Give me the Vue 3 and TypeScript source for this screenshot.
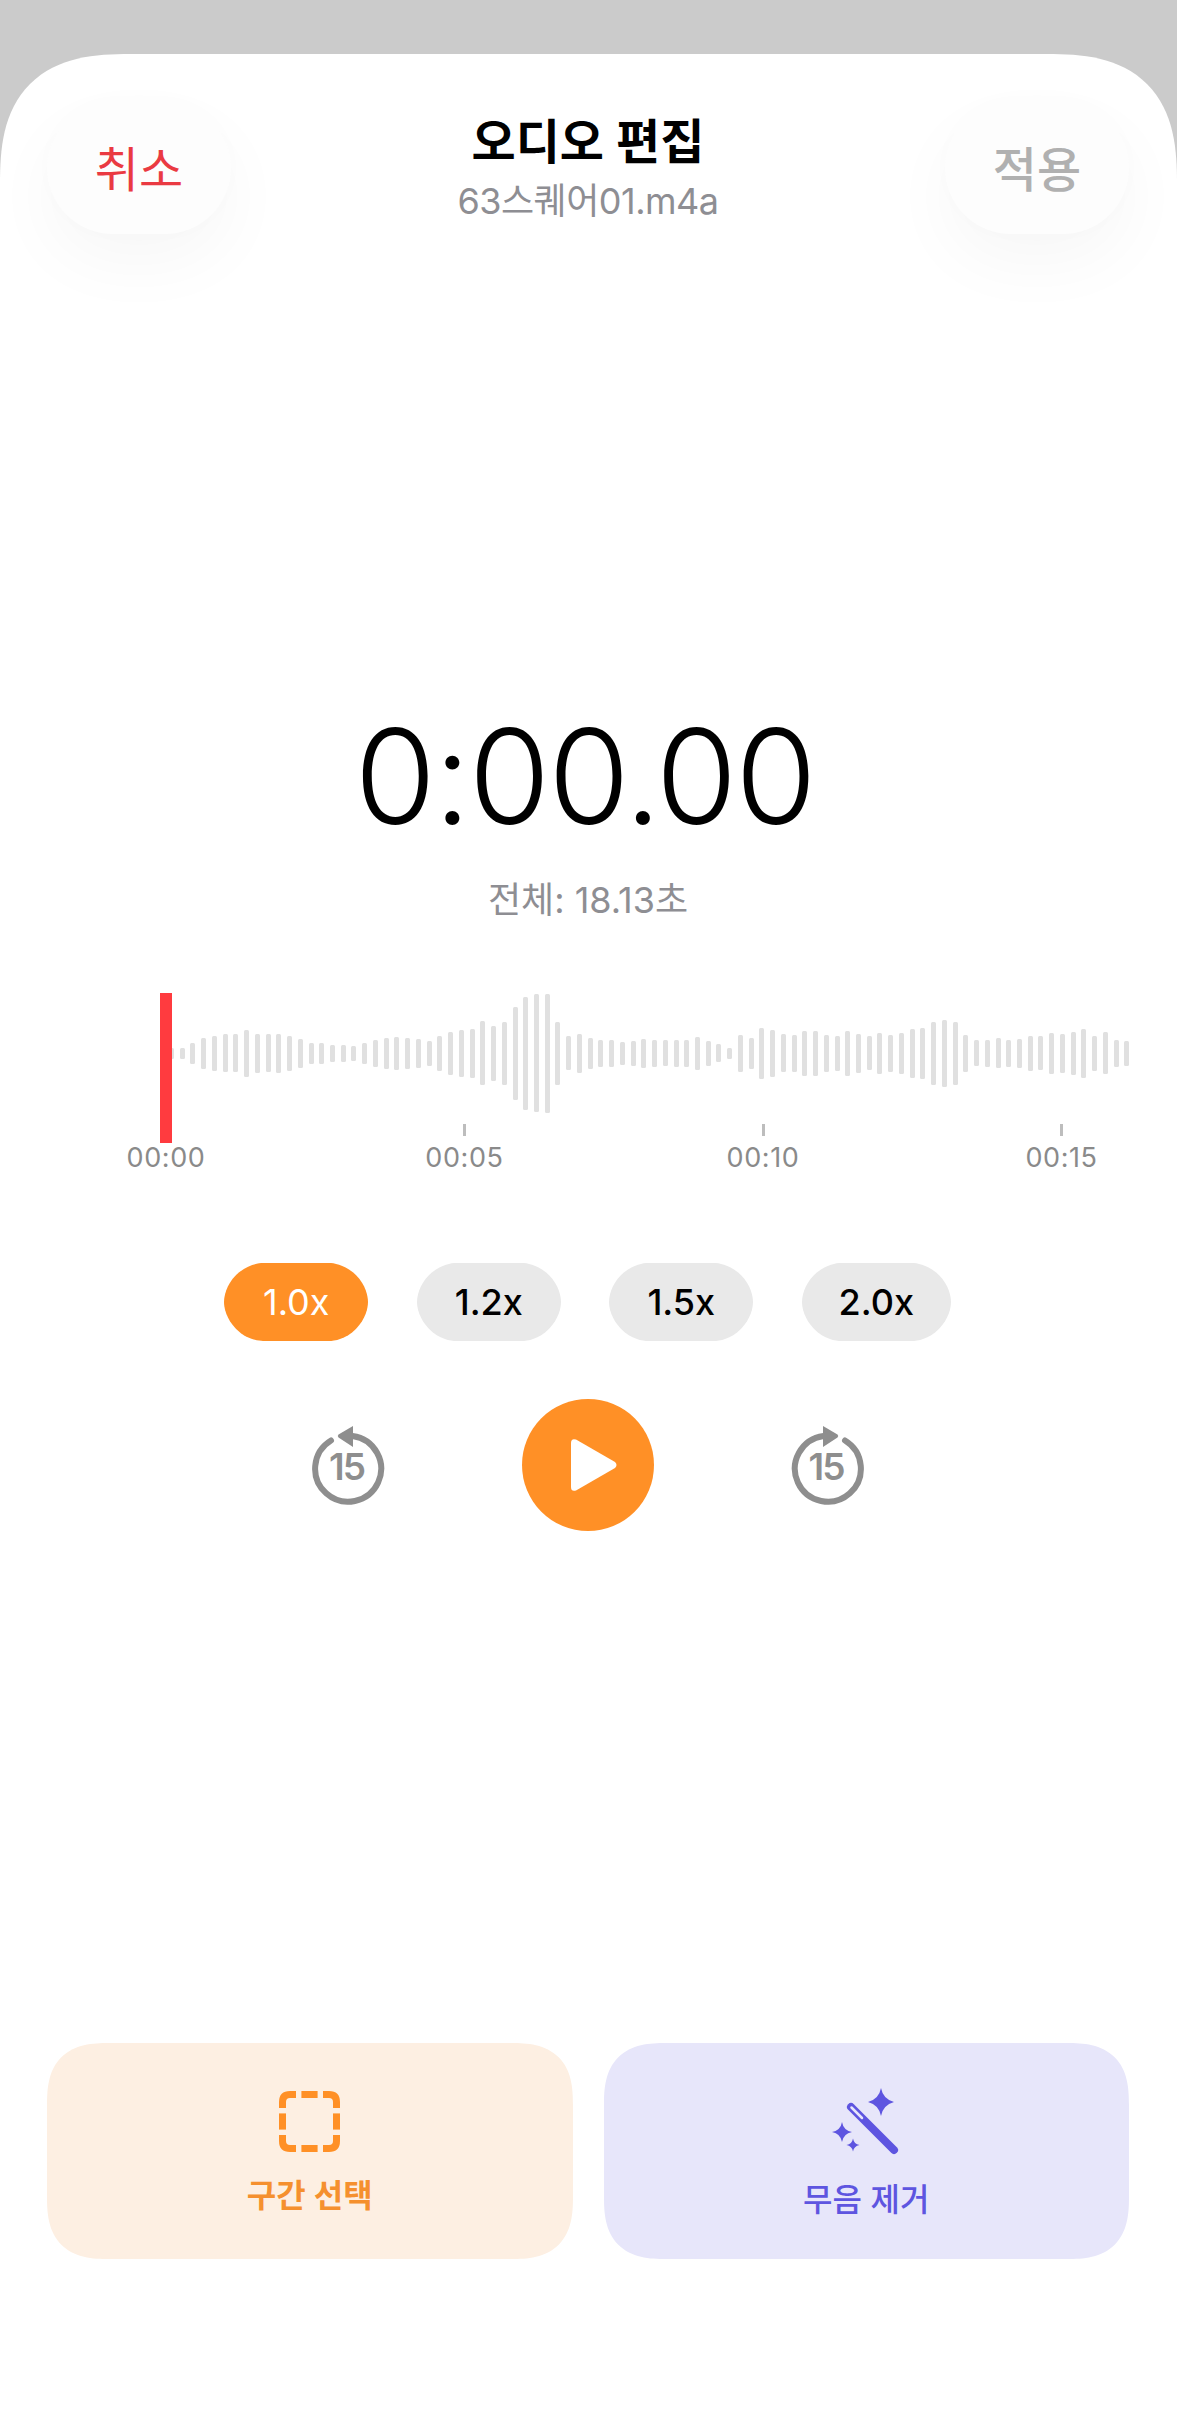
<template>
  <div class="screen">
    <div class="sheet">
      <!-- 헤더 -->
      <header class="header">
        <button class="head-btn cancel">취소</button>
        <div class="head-title">
          <h1 class="title">오디오 편집</h1>
          <p class="file-name">63스퀘어01.m4a</p>
        </div>
        <button class="head-btn apply">적용</button>
      </header>

      <!-- 시간 -->
      <div class="time">0:00.00</div>
      <div class="total">전체: 18.13초</div>

      <!-- 파형 -->
      <div class="wave-wrap">
        <div class="wave">
          <span
            v-for="(h, i) in bars"
            :key="i"
            class="bar"
            :style="{ height: h + 'px' }"
          ></span>
        </div>
        <div class="playhead"></div>
      </div>
      <div class="ticks">
        <div v-for="(t, i) in ticks" :key="t" class="tick">
          <span class="tick-line" :class="{ hidden: i === 0 }"></span>
          <span class="tick-label">{{ t }}</span>
        </div>
      </div>

      <!-- 배속 -->
      <div class="speeds">
        <button
          v-for="s in speeds"
          :key="s"
          class="speed"
          :class="{ active: s === speed, wide: s === '2.0x' }"
        >
          {{ s }}
        </button>
      </div>

      <!-- 재생 컨트롤 -->
      <div class="controls">
        <svg class="skip" viewBox="0 0 80 84" width="80" height="84">
          <path d="M21 17.5 A33 33 0 1 0 42.5 13" class="skip-arc" />
          <path d="M43 3 L28.5 11.5 Q27 13 28.5 14.5 L43 24 Z" class="skip-head" />
          <text x="36.5" y="57" class="skip-text">15</text>
        </svg>
        <button class="play">
          <svg viewBox="0 0 48 54" width="48" height="54">
            <path
              d="M1 5 Q1 0 6 1.5 L45 24 Q48 27 45 30 L6 52.500 Q1 54 1 49 Z"
              fill="#fff"
            />
          </svg>
        </button>
        <svg class="skip" viewBox="0 0 80 84" width="80" height="84">
          <path d="M59 17.5 A33 33 0 1 1 37.5 13" class="skip-arc" />
          <path d="M37 3 L51.5 11.5 Q53 13 51.5 14.5 L37 24 Z" class="skip-head" />
          <text x="40" y="57" class="skip-text">15</text>
        </svg>
      </div>

      <!-- 하단 액션 -->
      <div class="actions">
        <button class="action select">
          <svg viewBox="0 0 61 61" width="61" height="61" class="action-icon">
            <g fill="none" stroke="#ff9026" stroke-width="7">
              <path d="M3.5 17 V11 Q3.500 3.500 11 3.500 H17" />
              <path d="M22.4 3.5 H38.6" />
              <path d="M44 3.5 H50 Q57.500 3.500 57.500 11 V17" />
              <path d="M57.5 22.4 V38.6" />
              <path d="M57.5 44 V50 Q57.500 57.500 50 57.500 H44" />
              <path d="M38.6 57.5 H22.4" />
              <path d="M17 57.5 H11 Q3.500 57.500 3.500 50 V44" />
              <path d="M3.5 38.6 V22.4" />
            </g>
          </svg>
          <span class="action-label">구간 선택</span>
        </button>
        <button class="action silence">
          <svg viewBox="0 0 66 68" width="66" height="68" class="action-icon">
            <g fill="#5e55e0">
              <path d="M48 0 Q50 11 61 14 Q50 17 48 28 Q46 17 35 14 Q46 11 48 0 Z" />
              <path d="M9 34 Q10.5 42.5 19 44 Q10.5 45.5 9 54 Q7.5 45.5 -1 44 Q7.5 42.5 9 34 Z" />
              <path d="M20 50.5 Q21 56 26.500 57 Q21 58 20 63.500 Q19 58 13.500 57 Q19 56 20 50.500 Z" />
            </g>
            <path d="M18 19 L61 62" stroke="#5e55e0" stroke-width="8" stroke-linecap="round" />
            <path d="M18.500 19.500 L29 30" stroke="#e7e6fa" stroke-width="2.500" stroke-linecap="round" />
          </svg>
          <span class="action-label">무음 제거</span>
        </button>
      </div>
    </div>
  </div>
</template>

<script setup lang="ts">
import { ref } from "vue";

defineOptions({ name: "AudioEditor" });

const speeds = ["1.0x", "1.2x", "1.5x", "2.0x"];
const speed = ref("1.0x");
const ticks = ["00:00", "00:05", "00:10", "00:15"];

// 파형 막대 높이
const bars = [
  11, 11, 21, 31, 35, 38, 38, 47, 39, 38, 39, 35, 29, 21, 21, 17, 17, 15, 21, 27, 31,
  33, 31, 29, 25, 35, 43, 47, 49, 64, 55, 63, 93, 113, 118, 119, 63, 34, 39, 31, 27, 27,
  23, 25, 29, 27, 26, 27, 27, 33, 25, 18, 11, 37, 31, 51, 47, 38, 37, 45, 45, 37, 35,
  45, 39, 34, 41, 37, 41, 49, 51, 63, 67, 63, 37, 26, 27, 30, 27, 29, 35, 34, 41, 39,
  43, 49, 35, 42, 27, 25,
];
</script>

<style>
html,
body {
  margin: 0;
  background: #cbcbcb;
}
</style>

<style scoped>
.screen {
  height: 2433px;
  padding-top: 54px;
  box-sizing: border-box;
  background: #cbcbcb;
  font-family: "Inter", "Noto Sans CJK KR", sans-serif;
  overflow: hidden;
}

.sheet {
  height: 100%;
  box-sizing: border-box;
  padding: 48px 48px 174px 47px;
  background: #fff;
  border-radius: 130px 130px 0 0;
  corner-shape: superellipse(1.4);
  display: flex;
  flex-direction: column;
}

button {
  border: none;
  padding: 0;
  font-family: inherit;
}

/* 헤더 */
.header {
  display: flex;
  justify-content: space-between;
  align-items: flex-start;
}

.head-btn {
  width: 184px;
  height: 132px;
  padding-bottom: 5px;
  border-radius: 66px;
  background: #fdfdfd;
  box-shadow: 0 28px 70px rgba(0, 0, 0, 0.035), 0 0 30px rgba(0, 0, 0, 0.012);
  font-size: 48px;
}

.cancel {
  color: #ea3a42;
}

.apply {
  color: #b0b0b0;
  font-weight: 500;
}

.head-title {
  text-align: center;
  padding-top: 5px;
}

.title {
  margin: 0;
  font-size: 48px;
  line-height: 70px;
  font-weight: 600;
  color: #000;
}

.file-name {
  margin: 0;
  font-size: 36px;
  line-height: 48px;
  letter-spacing: -0.5px;
  color: #8e8e93;
}

/* 시간 */
.time {
  margin-top: 462px;
  padding-right: 7px;
  text-align: center;
  font-size: 132px;
  line-height: 160px;
  font-weight: 330;
  letter-spacing: -2.2px;
  color: #000;
}

.total {
  margin-top: 22px;
  text-align: center;
  font-size: 36px;
  line-height: 44px;
  color: #8e8e93;
}

/* 파형 */
.wave-wrap {
  position: relative;
  margin-top: 71px;
}

.wave {
  height: 120px;
  margin-left: 122px;
  display: flex;
  align-items: center;
  gap: 5.74px;
}

.bar {
  flex: none;
  width: 5px;
  border-radius: 1.5px;
  background: #e0e0e0;
}

.playhead {
  position: absolute;
  left: 113px;
  top: 0;
  width: 12px;
  height: 150px;
  background: #ff3b3f;
}

.ticks {
  margin: 11px 0 0 69px;
  display: flex;
  gap: 198.5px;
}

.tick {
  width: 100px;
  display: flex;
  flex-direction: column;
  align-items: center;
}

.tick-line {
  width: 3px;
  height: 12px;
  background: #bdbdbd;
}

.tick-line.hidden {
  visibility: hidden;
}

.tick-label {
  margin-top: 6px;
  font-size: 27px;
  line-height: 32px;
  letter-spacing: 0.6px;
  color: #8a8a8a;
}

/* 배속 */
.speeds {
  margin-top: 89px;
  padding-right: 1px;
  display: flex;
  justify-content: center;
  gap: 48.5px;
}

.speed {
  width: 144px;
  height: 78px;
  border-radius: 39px;
  corner-shape: superellipse(0.9);
  background: #e9e9e9;
  color: #000;
  font-size: 36px;
  font-weight: 500;
}

.speed.wide {
  width: 149px;
}

.speed.active {
  background: #ff9026;
  color: #fff;
  font-weight: 400;
}

/* 재생 컨트롤 */
.controls {
  margin-top: 58px;
  display: flex;
  justify-content: center;
  align-items: center;
  gap: 132px;
}

.skip {
  flex: none;
}

.skip-arc {
  fill: none;
  stroke: #8e8e8e;
  stroke-width: 6;
  stroke-linecap: round;
}

.skip-head {
  fill: #8e8e8e;
}

.skip-text {
  font-size: 37px;
  font-weight: 600;
  letter-spacing: -2px;
  fill: #8e8e8e;
  text-anchor: middle;
}

.play {
  flex: none;
  width: 132px;
  height: 132px;
  border-radius: 50%;
  background: #ff9026;
  display: flex;
  align-items: center;
  justify-content: center;
  padding-left: 12px;
  box-sizing: border-box;
}

/* 하단 액션 */
.actions {
  margin-top: auto;
  display: flex;
  gap: 31px;
}

.action {
  flex: 1;
  height: 216px;
  border-radius: 62px;
  corner-shape: superellipse(1.4);
  display: flex;
  flex-direction: column;
  align-items: center;
}

.action-icon {
  display: block;
  overflow: visible;
}

.action-label {
  font-size: 32px;
  line-height: 40px;
  font-weight: 600;
}

.select {
  background: #fdefe2;
  color: #f5902e;
  padding-top: 48px;
}

.select .action-label {
  margin-top: 24px;
}

.silence {
  background: #e7e6fa;
  color: #5e55e0;
  padding-top: 45px;
}

.silence .action-label {
  margin-top: 24px;
  font-weight: 500;
}
</style>
